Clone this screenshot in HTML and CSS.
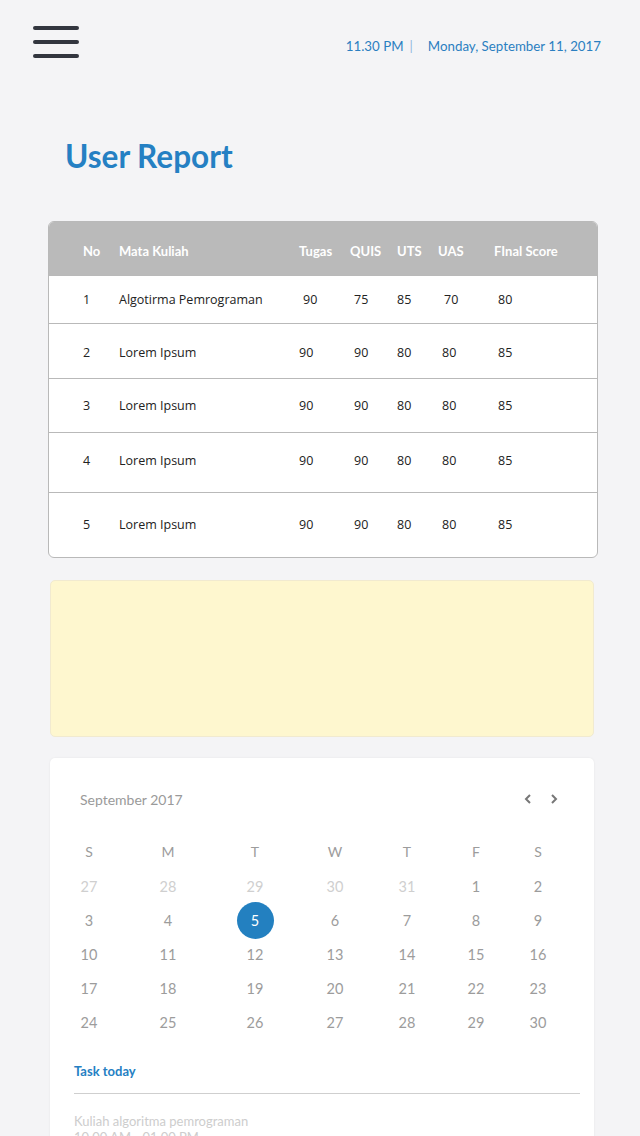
FILE: index.html
```html
<!DOCTYPE html>
<html lang="en">
<head>
<meta charset="utf-8">
<title>User Report</title>
<link rel="stylesheet" href="styles.css">
</head>
<body>
<div class="page">
  <header class="topbar">
    <div class="burger"><span></span><span></span><span></span></div>
    <div class="clock"><span class="time">11.30 PM</span><span class="sep">|</span><span class="date">Monday, September 11, 2017</span></div>
  </header>

  <h1 class="title">User Report</h1>

  <div class="report">
    <div class="row head">
      <span>No</span><span>Mata Kuliah</span><span>Tugas</span><span>QUIS</span><span>UTS</span><span>UAS</span><span>FInal Score</span>
    </div>
    <div class="row r1">
      <span>1</span><span>Algotirma Pemrograman</span><span class="shift">90</span><span class="shift">75</span><span>85</span><span class="shift2">70</span><span class="shift">80</span>
    </div>
    <div class="row r2">
      <span>2</span><span>Lorem Ipsum</span><span>90</span><span class="shift">90</span><span>80</span><span class="shift">80</span><span class="shift">85</span>
    </div>
    <div class="row r3">
      <span>3</span><span>Lorem Ipsum</span><span>90</span><span class="shift">90</span><span>80</span><span class="shift">80</span><span class="shift">85</span>
    </div>
    <div class="row r4">
      <span>4</span><span>Lorem Ipsum</span><span>90</span><span class="shift">90</span><span>80</span><span class="shift">80</span><span class="shift">85</span>
    </div>
    <div class="row r5">
      <span>5</span><span>Lorem Ipsum</span><span>90</span><span class="shift">90</span><span>80</span><span class="shift">80</span><span class="shift">85</span>
    </div>
  </div>

  <div class="note"></div>

  <div class="calendar">
    <div class="cal-head">
      <span class="month">September 2017</span>
      <div class="arrows">
        <svg width="10" height="12" viewBox="0 0 10 12"><path d="M7 2 L3 6 L7 10" fill="none" stroke="#777" stroke-width="2"/></svg>
        <svg width="10" height="12" viewBox="0 0 10 12"><path d="M3 2 L7 6 L3 10" fill="none" stroke="#777" stroke-width="2"/></svg>
      </div>
    </div>
    <div class="grid">
      <span class="dow">S</span><span class="dow">M</span><span class="dow">T</span><span class="dow">W</span><span class="dow">T</span><span class="dow">F</span><span class="dow">S</span>
      <span class="prev">27</span><span class="prev">28</span><span class="prev">29</span><span class="prev">30</span><span class="prev">31</span><span>1</span><span>2</span>
      <span>3</span><span>4</span><span class="sel"><b>5</b></span><span>6</span><span>7</span><span>8</span><span>9</span>
      <span>10</span><span>11</span><span>12</span><span>13</span><span>14</span><span>15</span><span>16</span>
      <span>17</span><span>18</span><span>19</span><span>20</span><span>21</span><span>22</span><span>23</span>
      <span>24</span><span>25</span><span>26</span><span>27</span><span>28</span><span>29</span><span>30</span>
    </div>
    <div class="task">
      <h2>Task today</h2>
      <div class="task-item">
        <p>Kuliah algoritma pemrograman</p>
        <p>10.00 AM - 01.00 PM</p>
      </div>
    </div>
  </div>
</div>
</body>
</html>
```

FILE: styles.css
```css
* { box-sizing: border-box; }
html, body { margin: 0; padding: 0; }
body {
  background: #f4f4f6;
  font-family: Lato, "Open Sans", sans-serif;
  width: 640px;
  height: 1136px;
  overflow: hidden;
}
.page { padding: 0; }

.topbar {
  height: 92px;
  display: flex;
  justify-content: space-between;
  align-items: flex-start;
  padding: 26px 39px 0 33px;
}
.burger { display: flex; flex-direction: column; gap: 10px; }
.burger span {
  display: block;
  width: 46px;
  height: 4px;
  border-radius: 2px;
  background: #33363f;
}
.clock {
  margin-top: 12px;
  font-size: 13.3px;
  color: #2b7fc1;
  display: flex;
  align-items: center;
}
.sep { color: #8fb7dd; margin: 0 15px 0 6px; }

.title {
  margin: 45px 0 0 65px;
  font-size: 31.5px;
  font-weight: 700;
  color: #2580c3;
  height: 38px;
  line-height: 38px;
}

.report {
  margin: 46px 42px 0 48px;
  background: #fff;
  border: 1px solid #b9b9b9;
  border-radius: 6px;
  overflow: hidden;
  font-family: "Open Sans", "Noto Sans", sans-serif;
  font-size: 12.5px;
  color: #222;
}
.row {
  display: grid;
  grid-template-columns: 36px 180px 51px 47px 41px 56px 1fr;
  align-items: center;
  padding-left: 34px;
  border-top: 1px solid #b9b9b9;
}
.row.head {
  border-top: none;
  background: #bababa;
  color: #fff;
  font-family: Lato, sans-serif;
  font-weight: 700;
  font-size: 13px;
  height: 53px;
  padding-top: 4px;
}
.r1 { height: 48px; }
.r2 { height: 55px; padding-top: 2px; }
.r3 { height: 54px; }
.r4 { height: 60px; padding-bottom: 5px; }
.r5 { height: 65px; padding-bottom: 2px; }
.shift { padding-left: 4px; }
.shift2 { padding-left: 6px; }

.note {
  margin: 22px 46px 0 50px;
  height: 157px;
  background: #fef7cf;
  border: 1px solid #f1ead0;
  border-radius: 5px;
}

.calendar {
  margin: 21px 46px 0 50px;
  background: #fff;
  border-radius: 5px;
  box-shadow: 0 0 2px rgba(0,0,0,0.08);
  padding: 30px 0 0 0;
  height: 400px;
}
.cal-head {
  display: flex;
  justify-content: space-between;
  align-items: center;
  padding: 0 35px 0 30px;
  height: 22px;
}
.month { font-size: 14px; color: #9a9a9a; }
.arrows { display: flex; gap: 16px; padding-top: 0; }
.arrows svg { display: block; }

.grid {
  margin-top: 25px;
  display: grid;
  grid-template-columns: 78px 80px 94px 66px 78px 60px 64px;
  grid-auto-rows: 34px;
  font-size: 14.5px;
  color: #9c9c9c;
}
.grid span {
  display: flex;
  align-items: center;
  justify-content: center;
}
.grid .dow { color: #9c9c9c; font-size: 14px; padding-bottom: 2px; }
.grid .prev { color: #cfcfcf; }
.grid .sel b {
  display: flex;
  align-items: center;
  justify-content: center;
  width: 37px;
  height: 37px;
  border-radius: 50%;
  background: #2380c0;
  color: #fff;
  font-weight: 400;
}

.task { padding: 21px 14px 0 24px; }
.task h2 {
  margin: 0;
  font-size: 13px;
  font-weight: 700;
  color: #2580c3;
  height: 22px;
  line-height: 22px;
  border-bottom: 1px solid #cfcfcf;
  box-sizing: content-box;
  padding-bottom: 11px;
}
.task-item { padding-top: 19px; }
.task-item p {
  margin: 0;
  font-size: 13px;
  color: #cdcdcd;
  line-height: 16px;
}
```
